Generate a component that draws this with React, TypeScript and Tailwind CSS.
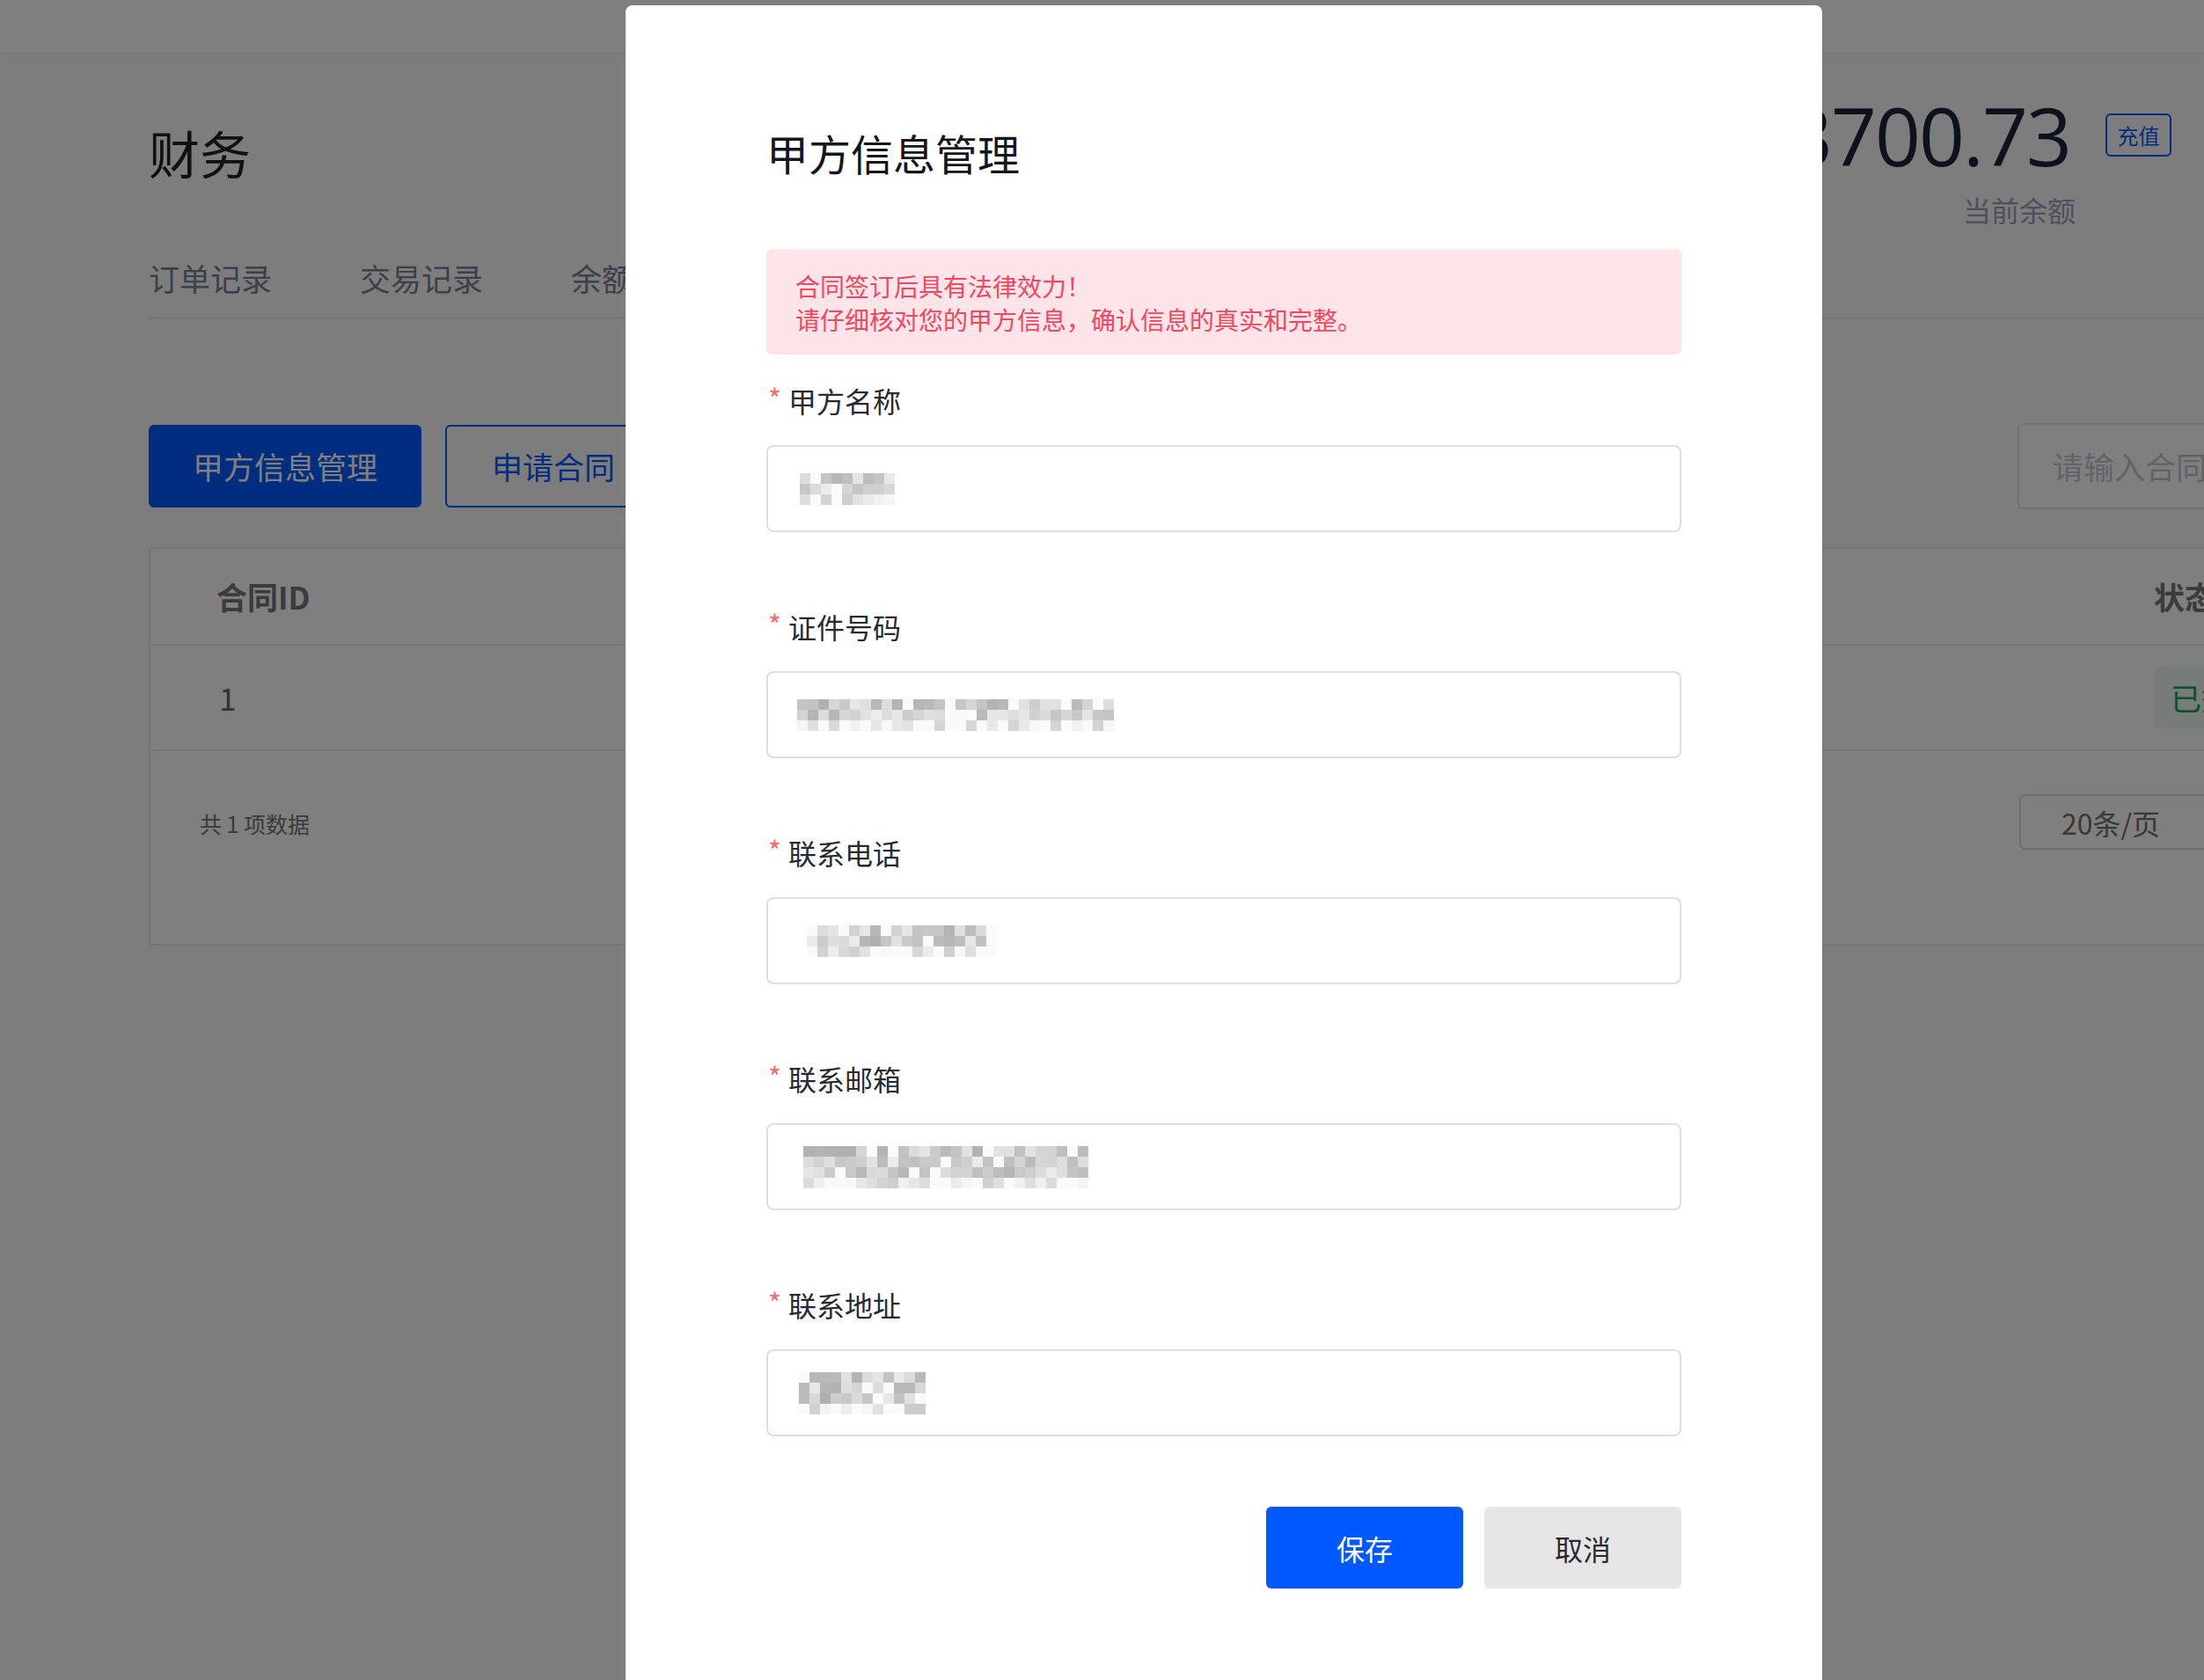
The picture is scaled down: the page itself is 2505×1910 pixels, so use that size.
import React from 'react';

// pixelated placeholder for masked values inside the inputs
const Mosaic: React.FC<{ cols: number; rows: number; seed: number; gapAt?: number }> = ({ cols, rows, seed, gapAt }) => {
  let s = seed;
  const rnd = () => {
    s = (s * 9301 + 49297) % 233280;
    return s / 233280;
  };
  const cells: string[] = [];
  for (let r = 0; r < rows; r++) {
    for (let c = 0; c < cols; c++) {
      const v = rnd();
      let shade = 176 + Math.floor(v * 70);
      if (r === rows - 1) shade = Math.min(250, shade + 28);
      if (v > 0.88 || c === gapAt) shade = 250;
      cells.push(`rgb(${shade},${shade},${shade})`);
    }
  }
  return (
    <div className="grid" style={{ gridTemplateColumns: `repeat(${cols}, 12px)`, gridAutoRows: '12px' }}>
      {cells.map((bg, i) => (
        <div key={i} style={{ background: bg }} />
      ))}
    </div>
  );
};

const fields = [
  { label: '甲方名称', cols: 9, rows: 3, seed: 11, pad: 'pl-[36px]' },
  { label: '证件号码', cols: 30, rows: 3, seed: 27, pad: 'pl-[33px]', gap: 14 },
  { label: '联系电话', cols: 18, rows: 3, seed: 43, pad: 'pl-[44px]' },
  { label: '联系邮箱', cols: 27, rows: 4, seed: 71, pad: 'pl-[40px]' },
  { label: '联系地址', cols: 12, rows: 4, seed: 95, pad: 'pl-[35px]' },
];

export default function App() {
  return (
    <div className="relative w-[2505px] h-[1910px] overflow-hidden bg-[#fafafa] font-['Noto_Sans_CJK_SC','Noto_Sans',sans-serif]">
      <header className="h-[60px] bg-white shadow-[0_2px_6px_rgba(0,0,0,0.06)]" />

      <main className="pl-[169px] w-[2800px]">
        <div className="flex w-[2299px] justify-between items-start">
          <h1 className="mt-[84px] text-[58px] leading-[58px] text-[#222222]">财务</h1>
          <div className="flex items-start mt-[49px]">
            <div className="flex flex-col items-end">
              <div className="font-['Open_Sans',sans-serif] text-[91px] leading-[90px] tracking-[-2px] text-[#1c2438]">113700.73</div>
              <div className="mt-[19px] mr-[-6px] text-[32px] leading-[40px] text-[#9aa2b6]">当前余额</div>
            </div>
            <div className="ml-[40px] mt-[20px] w-[75px] h-[49px] flex items-center justify-center border-2 border-[#005aff] rounded-[6px] text-[24px] text-[#005aff]">
              充值
            </div>
          </div>
        </div>

        <div className="flex gap-[100px] mt-[40px] pb-[28px] border-b-2 border-[#e8e8e8] text-[35px] leading-[35px] text-[#7a8090]">
          <span>订单记录</span>
          <span>交易记录</span>
          <span>余额明细</span>
          <span className="text-[#005aff]">合同管理</span>
        </div>

        <div className="flex items-center w-[2524px] mt-[118px]">
          <button className="w-[310px] h-[94px] rounded-[6px] bg-[#005aff] text-white text-[35px]">甲方信息管理</button>
          <button className="ml-[27px] w-[246px] h-[94px] rounded-[6px] border-2 border-[#005aff] text-[#005aff] text-[35px]">申请合同</button>
          <div className="ml-auto w-[400px] h-[98px] rounded-[6px] border-2 border-[#e4e4e4] bg-white flex items-center pl-[38px] text-[35px] text-[#c4c6cc]">
            请输入合同编号
          </div>
        </div>

        <div className="mt-[43px] w-[2450px] h-[453px] border-2 border-[#ebebeb] bg-white">
          <div className="flex h-[110px] items-center border-b-2 border-[#ebebeb] text-[35px] font-bold text-[#777777]">
            <span className="pl-[75px]">合同ID</span>
            <span className="ml-auto w-[170px] pl-[1px]">状态</span>
          </div>
          <div className="flex h-[120px] items-center border-b-2 border-[#ebebeb] text-[35px] text-[#666666]">
            <span className="pl-[78px]">1</span>
            <span className="ml-auto w-[170px] pl-[1px]">
              <span className="inline-flex items-center h-[70px] pl-[19px] pr-[24px] rounded-[8px] bg-[#eef8f1] text-[#18a058]">已签署</span>
            </span>
          </div>
          <div className="flex items-start">
            <span className="pl-[56px] mt-[67px] text-[25px] leading-[30px] text-[#747474]">共 1 项数据</span>
            <div className="ml-auto mr-[62px] mt-[49px] w-[260px] h-[63px] rounded-[6px] border-2 border-[#dedede] flex items-center pl-[46px] text-[32px] text-[#707070]">
              20条/页
            </div>
          </div>
        </div>
      </main>

      <div className="absolute inset-0 bg-black/50" />

      <div className="absolute left-[711px] top-[6px] w-[1360px] h-[1960px] bg-white rounded-[8px] px-[160px] pt-[143px]">
        <h2 className="text-[48px] leading-[48px] text-[#15161c]">甲方信息管理</h2>

        <div className="mt-[86px] h-[120px] rounded-[6px] bg-[#fde4e8] pt-[23px] pl-[33px] text-[28px] leading-[38px] text-[#f2475e]">
          <p>合同签订后具有法律效力！</p>
          <p>请仔细核对您的甲方信息，确认信息的真实和完整。</p>
        </div>

        <div className="mt-[32px]">
          {fields.map((f, i) => (
            <div key={f.label} className={i > 0 ? 'mt-[87px]' : ''}>
              <div className="flex items-center h-[40px] text-[32px] leading-[40px] text-[#262a33]">
                <span className="ml-[2px] mr-[8px] mt-[-6px] text-[32px] leading-[32px] text-[#f56c6c]">*</span>
                {f.label}
              </div>
              <div className={`mt-[31px] h-[99px] rounded-[8px] border-2 border-[#dcdfe6] flex items-center ${f.pad}`}>
                <Mosaic cols={f.cols} rows={f.rows} seed={f.seed} gapAt={f.gap} />
              </div>
            </div>
          ))}
        </div>

        <div className="mt-[80px] flex justify-end gap-[24px]">
          <button className="w-[224px] h-[93px] rounded-[6px] bg-[#0058ff] text-white text-[32px]">保存</button>
          <button className="w-[224px] h-[93px] rounded-[6px] bg-[#e6e6e6] text-[#262a33] text-[32px]">取消</button>
        </div>
      </div>
    </div>
  );
}
